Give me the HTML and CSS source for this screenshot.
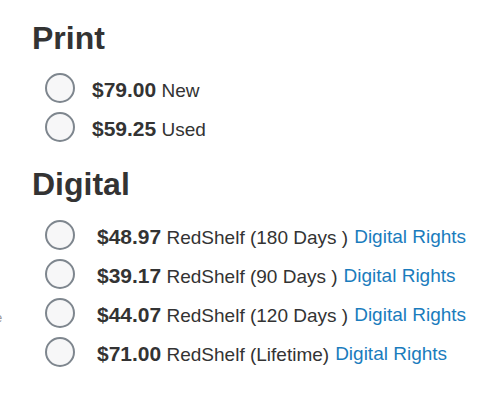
FILE: index.html
```html
<!DOCTYPE html>
<html lang="en">

<head>
    <meta charset="UTF-8">
    <meta name="viewport" content="width=device-width, initial-scale=1.0">
    <title>Purchase options</title>
    <link rel="stylesheet" href="styles.css">
</head>

<body>
    <span class="stray">e</span>
    <div class="formats">
        <!-- 纸质版 -->
        <section class="group">
            <h2>Print</h2>
            <ul class="choices">
                <li>
                    <label><input type="radio" name="format"><span class="desc"><span class="price">$79.00</span> New</span></label>
                </li>
                <li>
                    <label><input type="radio" name="format"><span class="desc"><span class="price">$59.25</span> Used</span></label>
                </li>
            </ul>
        </section>
        <!-- 电子版 -->
        <section class="group">
            <h2>Digital</h2>
            <ul class="choices digital">
                <li>
                    <label><input type="radio" name="format"><span class="desc"><span class="price">$48.97</span> RedShelf (180 Days )</span></label>
                    <a href="#">Digital Rights</a>
                </li>
                <li>
                    <label><input type="radio" name="format"><span class="desc"><span class="price">$39.17</span> RedShelf (90 Days )</span></label>
                    <a href="#">Digital Rights</a>
                </li>
                <li>
                    <label><input type="radio" name="format"><span class="desc"><span class="price">$44.07</span> RedShelf (120 Days )</span></label>
                    <a href="#">Digital Rights</a>
                </li>
                <li>
                    <label><input type="radio" name="format"><span class="desc"><span class="price">$71.00</span> RedShelf (Lifetime)</span></label>
                    <a href="#">Digital Rights</a>
                </li>
            </ul>
        </section>
    </div>
</body>

</html>
```

FILE: styles.css
```css
* {
    margin: 0;
    padding: 0;
    box-sizing: border-box;
    list-style: none;
}

body {
    position: relative;
    background: #fff;
    color: #333;
    font-family: "Liberation Sans", Arial, sans-serif;
}

.formats {
    padding: 20px 0 0 32px;
}

.group h2 {
    font-size: 32px;
    line-height: 36px;
    font-weight: bold;
    color: #333;
}

.group+.group {
    margin-top: 20px;
}

/* 选项列表 */

.choices {
    padding: 12px 0 0 13px;
}

.choices.digital {
    padding-top: 13px;
}

.choices li {
    display: flex;
    align-items: center;
    height: 39px;
    font-size: 19px;
}

.choices label {
    display: flex;
    align-items: center;
    cursor: pointer;
}

.choices input {
    appearance: none;
    -webkit-appearance: none;
    flex: none;
    width: 30px;
    height: 30px;
    margin-right: 17px;
    border: 2px solid #7e868e;
    border-radius: 50%;
    background: #f7f7f8;
    cursor: pointer;
}

.choices.digital input {
    margin-right: 22px;
}

/* 文字比圆圈略低 */

.desc,
.choices a {
    padding-top: 4px;
    white-space: nowrap;
}

.price {
    font-size: 21px;
    font-weight: bold;
}

.choices a {
    margin-left: 6px;
    color: #1a7cbd;
    text-decoration: none;
}

/* 左侧被截掉的字 */

.stray {
    position: absolute;
    left: -5px;
    top: 310px;
    font-size: 13px;
    color: #999;
}
```
